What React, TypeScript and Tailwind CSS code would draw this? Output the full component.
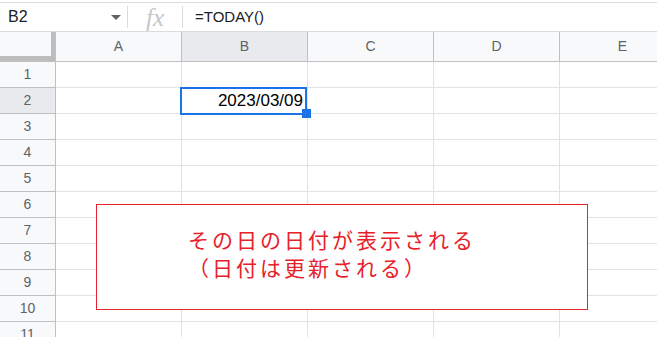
import React from "react";

const cols = ["A", "B", "C", "D", "E"];
const rows = [1, 2, 3, 4, 5, 6, 7, 8, 9, 10, 11];

export default function App() {
  return (
    <div className="relative w-[657px] h-[337px] overflow-hidden bg-white font-['Liberation_Sans',Arial,sans-serif]">
      {/* formula bar */}
      <div className="pt-[2px]">
        <div className="h-[30px] border-y border-[#dadce0] flex items-center">
          <div className="w-[127px] h-full flex items-center justify-between pl-[8px] pr-[6px]">
            <span className="text-[16px] text-[#202124]">B2</span>
            <svg width="10" height="6" viewBox="0 0 10 6" className="mt-[1px]">
              <polygon points="0,0 10,0 5,5" fill="#5f6368" />
            </svg>
          </div>
          <div className="w-px h-[22px] bg-[#dadce0]" />
          <div className="w-[54px] h-full flex items-center justify-center">
            <span className="font-['Liberation_Serif',serif] italic text-[25px] text-[#c4c7cc] leading-none">fx</span>
          </div>
          <div className="w-px h-[22px] bg-[#dadce0]" />
          <div className="pl-[12px] text-[15px] text-[#202124]">=TODAY()</div>
        </div>
      </div>

      {/* column header */}
      <div className="flex h-[30px] border-b border-[#c0c0c0] bg-[#f8f9fa]">
        <div className="w-[56px] shrink-0 h-full border-r border-[#c0c0c0]">
          <div className="w-full h-full border-r-[4px] border-b-[5px] border-[#bdbdbd]" />
        </div>
        {cols.map((c) => (
          <div
            key={c}
            className={`w-[126px] shrink-0 h-full border-r border-[#c0c0c0] flex items-center justify-center text-[14px] text-[#5f6368] ${
              c === "B" ? "bg-[#e8eaed]" : ""
            }`}
          >
            {c}
          </div>
        ))}
      </div>

      {/* rows */}
      {rows.map((r) => (
        <div key={r} className="flex h-[26px]">
          <div
            className={`w-[56px] shrink-0 h-full border-r border-b border-[#c0c0c0] flex items-center justify-center text-[14px] text-[#5f6368] ${
              r === 2 ? "bg-[#e8eaed]" : "bg-[#f8f9fa]"
            }`}
          >
            {r}
          </div>
          {cols.map((c) => (
            <div
              key={c}
              className="relative w-[126px] shrink-0 h-full border-r border-b border-[#e2e2e3]"
            >
              {r === 2 && c === "B" && (
                <>
                  <div className="h-full flex items-center justify-end pr-[4px] text-[17px] text-black">
                    2023/03/09
                  </div>
                  <div className="absolute z-10 left-[-2px] top-[-1px] w-[127px] h-[28px] border-2 border-[#1a73e8]" />
                  <div className="absolute z-20 left-[120px] top-[21px] w-[9px] h-[9px] bg-[#1a73e8]" />
                </>
              )}
            </div>
          ))}
        </div>
      ))}

      {/* annotation box */}
      <div className="absolute left-[96px] top-[204px] w-[492px] h-[106px] border border-[#e5242c] bg-white">
        <div className="pl-[91px] pt-[20px] text-[21px] leading-[28px] tracking-[3px] text-[#e8202a] font-['Noto_Sans_CJK_JP',sans-serif]">
          <div>その日の日付が表示される</div>
          <div>（日付は更新される）</div>
        </div>
      </div>
    </div>
  );
}
